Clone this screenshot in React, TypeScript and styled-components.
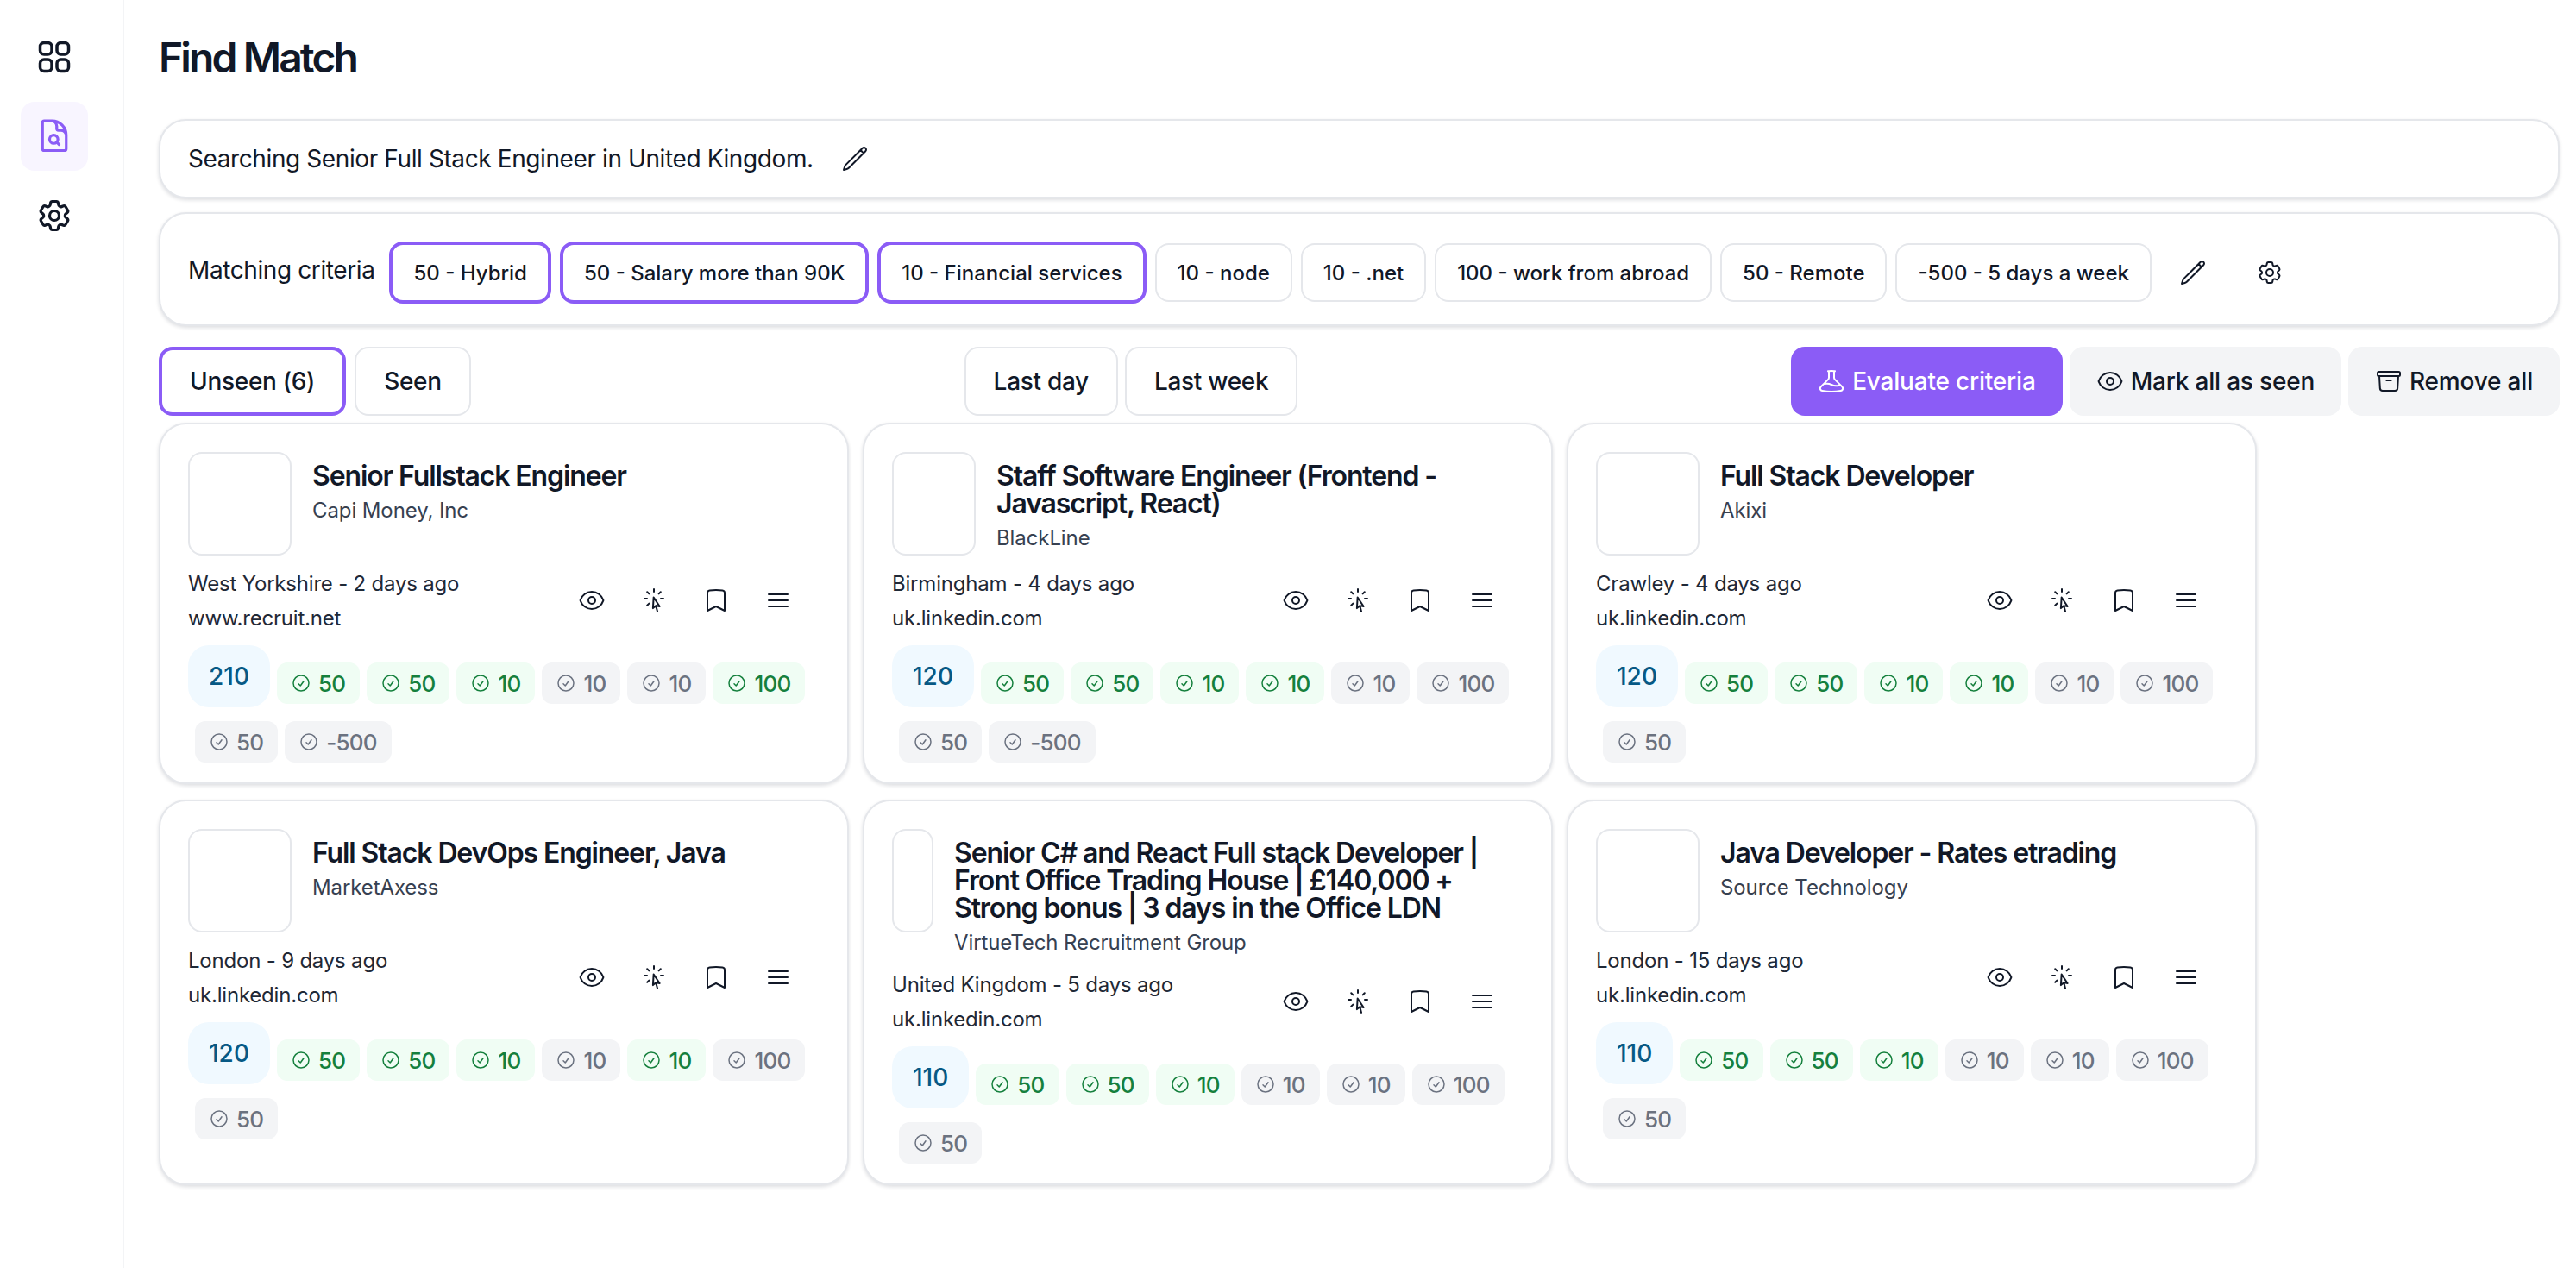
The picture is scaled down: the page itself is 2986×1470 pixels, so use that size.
import React from 'react'
import styled, { createGlobalStyle } from 'styled-components'
import {
  HiOutlineArchiveBox,
  HiOutlineBars3,
  HiOutlineBeaker,
  HiOutlineBookmark,
  HiOutlineCheckCircle,
  HiOutlineCog6Tooth,
  HiOutlineCursorArrowRays,
  HiOutlineDocumentMagnifyingGlass,
  HiOutlineEye,
  HiOutlinePencil,
  HiOutlineSquares2X2,
} from 'react-icons/hi2'

const GlobalStyle = createGlobalStyle`
  html, body {
    margin: 0;
    background: #fff;
    color: #111827;
    font-family: Inter, "Noto Sans", sans-serif;
  }
  * { box-sizing: border-box; }
`

const Page = styled.div`
  display: flex;
  min-height: 1470px;
`

const Sidebar = styled.nav`
  width: 144px;
  flex-shrink: 0;
  border-right: 2px solid #f3f4f6;
  padding: 26px 0 0 24px;
  display: flex;
  flex-direction: column;
  gap: 12px;
`

const NavItem = styled.div<{ $active?: boolean }>`
  width: 78px;
  height: 80px;
  border-radius: 16px;
  display: flex;
  align-items: center;
  justify-content: center;
  color: ${({ $active }) => ($active ? '#8b5cf6' : '#111827')};
  background: ${({ $active }) => ($active ? '#f8f5ff' : 'transparent')};
`

const Main = styled.main`
  flex: 1;
  min-width: 0;
  padding: 35px 19px 0 40px;
`

const Title = styled.h1`
  margin: 0 0 39px;
  font-size: 48px;
  line-height: 64px;
  font-weight: 600;
  letter-spacing: -0.06em;
`

const Panel = styled.section`
  display: flex;
  align-items: center;
  border: 2px solid #e5e7eb;
  border-radius: 32px;
  background: #fff;
  box-shadow: 0 2px 4px rgba(17, 24, 39, 0.14);
  padding: 0 32px;
`

const SearchPanel = styled(Panel)`
  height: 92px;
  gap: 32px;
  margin-bottom: 16px;
  font-size: 28px;
  letter-spacing: -0.4px;
`

const CriteriaPanel = styled(Panel)`
  height: 132px;
  padding-top: 32px;
  padding-bottom: 24px;
  margin-bottom: 24px;
`

const CriteriaLabel = styled.span`
  margin: 0 17px 6px 0;
  white-space: nowrap;
  font-size: 28px;
  letter-spacing: -0.4px;
`

const CriteriaList = styled.div`
  display: flex;
  align-items: center;
  gap: 10px;
`

const Criterion = styled.div<{ $active?: boolean }>`
  height: ${({ $active }) => ($active ? '72px' : '68px')};
  padding: 0 24px;
  display: flex;
  align-items: center;
  white-space: nowrap;
  font-size: 24px;
  font-weight: 500;
  border-radius: 16px;
  border: ${({ $active }) => ($active ? '4px solid #8b5cf6' : '2px solid #e5e7eb')};
`

const CriteriaIcons = styled.div`
  display: flex;
  align-items: center;
  gap: 57px;
  margin-left: 32px;
`

const Toolbar = styled.div`
  display: flex;
  justify-content: space-between;
  margin-bottom: 8px;
`

const ButtonGroup = styled.div<{ $gap: number }>`
  display: flex;
  gap: ${({ $gap }) => $gap}px;
`

const Tab = styled.div<{ $active?: boolean }>`
  height: 80px;
  padding: 0 32px;
  display: flex;
  align-items: center;
  font-size: 28px;
  font-weight: 500;
  letter-spacing: -0.3px;
  border-radius: 16px;
  border: ${({ $active }) => ($active ? '4px solid #8b5cf6' : '2px solid #e5e7eb')};
`

const ActionButton = styled.div<{ $primary?: boolean }>`
  height: 80px;
  padding: 0 31px;
  display: flex;
  align-items: center;
  gap: 8px;
  font-size: 28px;
  font-weight: 500;
  letter-spacing: -0.2px;
  border-radius: 16px;
  color: ${({ $primary }) => ($primary ? '#fff' : '#111827')};
  background: ${({ $primary }) => ($primary ? '#8b5cf6' : '#f3f4f6')};
`

const CardGrid = styled.div`
  display: grid;
  grid-template-columns: repeat(3, 800px);
  column-gap: 16px;
  row-gap: 18px;
`

const Card = styled.article`
  border: 2px solid #e5e7eb;
  border-radius: 32px;
  background: #fff;
  box-shadow: 0 2px 4px rgba(17, 24, 39, 0.14);
  padding: 32px 32px 23px;
`

const CardHeader = styled.header`
  display: flex;
  align-items: flex-start;
  gap: 24px;
  margin-bottom: 13px;
`

const Logo = styled.div<{ $width: number }>`
  flex-shrink: 0;
  width: ${({ $width }) => $width}px;
  height: 120px;
  border: 2px solid #e5e7eb;
  border-radius: 16px;
`

const JobHeading = styled.div`
  padding-top: 12px;
`

const JobTitle = styled.h2`
  margin: 0;
  font-size: 32px;
  line-height: 32px;
  font-weight: 600;
  letter-spacing: -0.035em;
`

const Company = styled.div`
  margin-top: 8px;
  font-size: 24px;
  line-height: 32px;
  letter-spacing: -0.1px;
  color: #374151;
`

const MetaRow = styled.div`
  display: flex;
  align-items: center;
  justify-content: space-between;
  margin-bottom: 11px;
`

const MetaText = styled.div`
  font-size: 24px;
  line-height: 40px;
  letter-spacing: -0.2px;
  color: #1f2937;
`

const CardActions = styled.div`
  display: flex;
  padding-right: 12px;
  margin-top: -2px;
`

const CardAction = styled.div`
  width: 72px;
  height: 32px;
  display: flex;
  justify-content: center;
`

const ScoreRow = styled.div`
  display: flex;
  flex-wrap: wrap;
  align-items: flex-end;
  row-gap: 20px;
`

const Score = styled.div`
  height: 72px;
  margin-bottom: -4px;
  padding: 0 24px;
  display: flex;
  align-items: center;
  font-size: 28px;
  font-weight: 500;
  color: #075985;
  background: #f0f9ff;
  border-radius: 24px;
`

const MatchChip = styled.div<{ $matched: boolean }>`
  height: 48px;
  margin-left: 8px;
  padding: 0 17px 0 16px;
  display: flex;
  align-items: center;
  gap: 8px;
  font-size: 26px;
  font-weight: 500;
  letter-spacing: -0.8px;
  border-radius: 12px;
  color: ${({ $matched }) => ($matched ? '#15803d' : '#6b7280')};
  background: ${({ $matched }) => ($matched ? '#f0fdf4' : '#f3f4f6')};
`

type Job = {
  title: string
  company: string
  place: string
  site: string
  score: number
  logoWidth: number
  chips: [string, boolean][]
}

const criteria: [string, boolean][] = [
  ['50 - Hybrid', true],
  ['50 - Salary more than 90K', true],
  ['10 - Financial services', true],
  ['10 - node', false],
  ['10 - .net', false],
  ['100 - work from abroad', false],
  ['50 - Remote', false],
  ['-500 - 5 days a week', false],
]

const values = ['50', '50', '10', '10', '10', '100', '50', '-500']

const chipsFrom = (matched: number[], count = 8): [string, boolean][] =>
  values.slice(0, count).map((value, i) => [value, matched.includes(i)])

const jobs: Job[] = [
  {
    title: 'Senior Fullstack Engineer',
    company: 'Capi Money, Inc',
    place: 'West Yorkshire - 2 days ago',
    site: 'www.recruit.net',
    score: 210,
    logoWidth: 120,
    chips: chipsFrom([0, 1, 2, 5]),
  },
  {
    title: 'Staff Software Engineer (Frontend - Javascript, React)',
    company: 'BlackLine',
    place: 'Birmingham - 4 days ago',
    site: 'uk.linkedin.com',
    score: 120,
    logoWidth: 97,
    chips: chipsFrom([0, 1, 2, 3]),
  },
  {
    title: 'Full Stack Developer',
    company: 'Akixi',
    place: 'Crawley - 4 days ago',
    site: 'uk.linkedin.com',
    score: 120,
    logoWidth: 120,
    chips: chipsFrom([0, 1, 2, 3], 7),
  },
  {
    title: 'Full Stack DevOps Engineer, Java',
    company: 'MarketAxess',
    place: 'London - 9 days ago',
    site: 'uk.linkedin.com',
    score: 120,
    logoWidth: 120,
    chips: chipsFrom([0, 1, 2, 4], 7),
  },
  {
    title: 'Senior C# and React Full stack Developer | Front Office Trading House | £140,000 + Strong bonus | 3 days in the Office LDN',
    company: 'VirtueTech Recruitment Group',
    place: 'United Kingdom - 5 days ago',
    site: 'uk.linkedin.com',
    score: 110,
    logoWidth: 48,
    chips: chipsFrom([0, 1, 2], 7),
  },
  {
    title: 'Java Developer - Rates etrading',
    company: 'Source Technology',
    place: 'London - 15 days ago',
    site: 'uk.linkedin.com',
    score: 110,
    logoWidth: 120,
    chips: chipsFrom([0, 1, 2], 7),
  },
]

const JobCard = ({ job }: { job: Job }) => (
  <Card>
    <CardHeader>
      <Logo $width={job.logoWidth} />
      <JobHeading>
        <JobTitle>{job.title}</JobTitle>
        <Company>{job.company}</Company>
      </JobHeading>
    </CardHeader>
    <MetaRow>
      <MetaText>
        <div>{job.place}</div>
        <div>{job.site}</div>
      </MetaText>
      <CardActions>
        <CardAction><HiOutlineEye size={32} /></CardAction>
        <CardAction><HiOutlineCursorArrowRays size={32} /></CardAction>
        <CardAction><HiOutlineBookmark size={32} /></CardAction>
        <CardAction><HiOutlineBars3 size={32} /></CardAction>
      </CardActions>
    </MetaRow>
    <ScoreRow>
      <Score>{job.score}</Score>
      {job.chips.map(([value, matched], i) => (
        <MatchChip key={i} $matched={matched}>
          <HiOutlineCheckCircle size={24} />
          {value}
        </MatchChip>
      ))}
    </ScoreRow>
  </Card>
)

const App = () => (
  <Page>
    <GlobalStyle />
    <Sidebar>
      <NavItem><HiOutlineSquares2X2 size={48} strokeWidth={1.75} /></NavItem>
      <NavItem $active><HiOutlineDocumentMagnifyingGlass size={44} strokeWidth={1.75} /></NavItem>
      <NavItem><HiOutlineCog6Tooth size={44} strokeWidth={1.75} /></NavItem>
    </Sidebar>
    <Main>
      <Title>Find Match</Title>
      <SearchPanel>
        Searching Senior Full Stack Engineer in United Kingdom.
        <HiOutlinePencil size={32} />
      </SearchPanel>
      <CriteriaPanel>
        <CriteriaLabel>Matching criteria</CriteriaLabel>
        <CriteriaList>
          {criteria.map(([label, active]) => (
            <Criterion key={label} $active={active}>{label}</Criterion>
          ))}
        </CriteriaList>
        <CriteriaIcons>
          <HiOutlinePencil size={32} />
          <HiOutlineCog6Tooth size={32} />
        </CriteriaIcons>
      </CriteriaPanel>
      <Toolbar>
        <ButtonGroup $gap={10}>
          <Tab $active>Unseen (6)</Tab>
          <Tab>Seen</Tab>
        </ButtonGroup>
        <ButtonGroup $gap={8}>
          <Tab>Last day</Tab>
          <Tab>Last week</Tab>
        </ButtonGroup>
        <ButtonGroup $gap={8}>
          <ActionButton $primary><HiOutlineBeaker size={32} />Evaluate criteria</ActionButton>
          <ActionButton><HiOutlineEye size={32} />Mark all as seen</ActionButton>
          <ActionButton><HiOutlineArchiveBox size={32} />Remove all</ActionButton>
        </ButtonGroup>
      </Toolbar>
      <CardGrid>
        {jobs.map(job => (
          <JobCard key={job.title} job={job} />
        ))}
      </CardGrid>
    </Main>
  </Page>
)

export default App
